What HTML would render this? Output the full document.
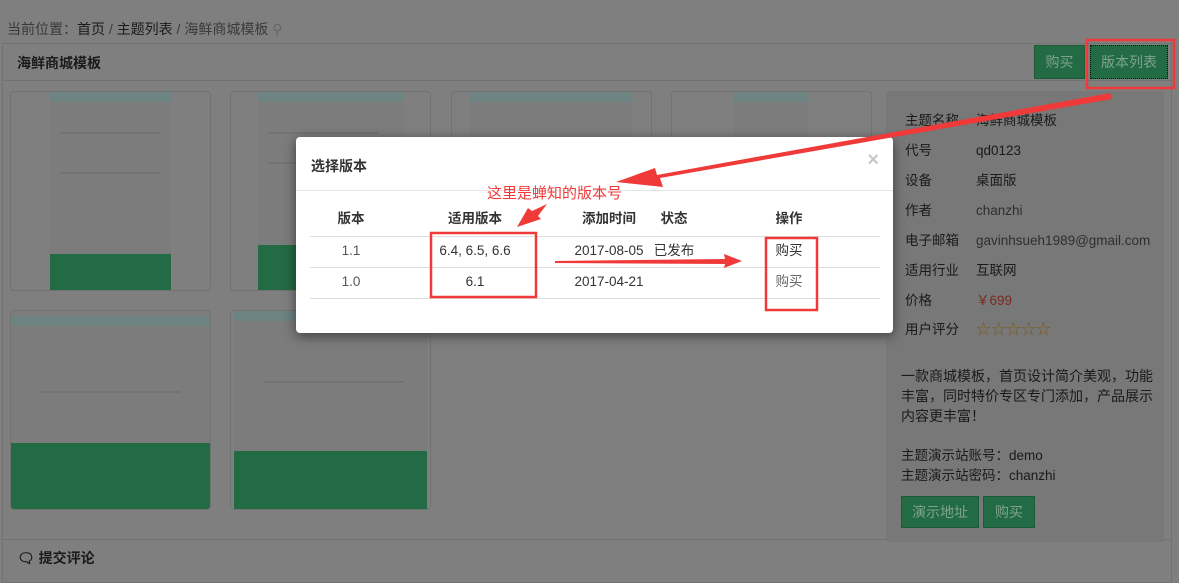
<!DOCTYPE html>
<html><head><meta charset="utf-8"><style>
*{box-sizing:border-box;margin:0;padding:0}
body{width:1179px;height:576px;overflow:hidden;background:#7f7f7f;font-family:"Liberation Sans","Noto Sans CJK SC",sans-serif;font-size:13px;color:#1a1a1a;position:relative}
.abs{position:absolute}
.crumb{left:7px;top:19px;font-size:14px;color:#3a3a3a}
.crumb b{font-weight:normal;color:#1a1a1a}
.panel{left:2px;top:43px;width:1170px;height:540px;border:1px solid #727272}
.hline{position:absolute;left:0;right:0;height:1px;background:#727272}
.title{left:17px;top:53px;font-size:14px;font-weight:bold}
.btn{position:absolute;background:#236b45;border:1px solid #1d5a3a;color:#7fa38f;font-size:14px;text-align:center}
.th{position:absolute;width:201px;height:200px;border:1px solid #727272;border-radius:4px;overflow:hidden;background:#7f7f7f}
.th .in{position:absolute;top:0;bottom:0;background:#7c7c7c}
.th .ban{position:absolute;left:0;right:0;top:0;height:10px;background:#6d8482}
.th .gr{position:absolute;left:0;right:0;bottom:0;background:#236b45}
.th .ln{position:absolute;height:2px;background:#737373}
.side{left:886px;top:91px;width:278px;height:451px;background:#787878}
.side .r,.side .v{position:absolute;font-size:13.5px;line-height:20px;height:20px;white-space:nowrap}
.side .r{left:19px}
.side .v{left:90px}
.modal{left:296px;top:137px;width:597px;height:196px;background:#fff;border-radius:4px;box-shadow:0 3px 12px rgba(0,0,0,.5)}
.modal .t{position:absolute;left:15px;top:19px;font-size:14px;font-weight:bold;color:#333}
.modal .x{position:absolute;right:14px;top:12px;font-size:20px;color:#c8c8c8;font-weight:bold}
.ml{position:absolute;left:14px;width:570px;height:1px;background:#ddd}
.c{position:absolute;font-size:13.5px;color:#333;transform:translateX(-50%);white-space:nowrap;line-height:20px}
.b{font-weight:bold}
</style></head><body>
<div class="abs crumb">当前位置：<b>首页</b> / <b>主题列表</b> / 海鲜商城模板 <span style="color:#666">&#9906;</span></div>
<div class="abs panel">
  <div class="hline" style="top:36px"></div>
  <div class="hline" style="top:495px"></div>
</div>
<div class="abs title">海鲜商城模板</div>
<div class="btn" style="left:1034px;top:45px;width:51px;height:34px;line-height:32px">购买</div>
<div class="btn" style="left:1090px;top:45px;width:78px;height:34px;line-height:32px;border:1px dotted #111">版本列表</div>

<div class="th" style="left:10px;top:91px"><div class="in" style="left:39px;width:121px"><div class="ban"></div><div class="ln" style="left:10px;top:40px;width:100px"></div><div class="ln" style="left:10px;top:80px;width:100px"></div><div class="gr" style="height:36px"></div></div></div>
<div class="th" style="left:230px;top:91px"><div class="in" style="left:27px;width:146px"><div class="ban"></div><div class="ln" style="left:10px;top:40px;width:110px"></div><div class="ln" style="left:10px;top:70px;width:110px"></div><div class="gr" style="height:45px"></div></div></div>
<div class="th" style="left:451px;top:91px"><div class="in" style="left:18px;width:162px"><div class="ban"></div></div></div>
<div class="th" style="left:671px;top:91px"><div class="in" style="left:62px;width:74px"><div class="ban"></div></div></div>
<div class="th" style="left:10px;top:310px"><div class="in" style="left:0;width:199px"><div class="ban" style="top:5px"></div><div class="ln" style="left:30px;top:80px;width:140px"></div><div class="gr" style="height:66px"></div></div></div>
<div class="th" style="left:230px;top:310px"><div class="in" style="left:3px;width:193px"><div class="ban" style="top:0"></div><div class="ln" style="left:30px;top:70px;width:140px"></div><div class="gr" style="height:58px"></div></div></div>

<div class="abs side">
  <div class="r" style="top:20px">主题名称</div><div class="v" style="top:20px">海鲜商城模板</div>
  <div class="r" style="top:50px">代号</div><div class="v" style="top:50px">qd0123</div>
  <div class="r" style="top:80px">设备</div><div class="v" style="top:80px">桌面版</div>
  <div class="r" style="top:110px">作者</div><div class="v" style="top:110px;color:#2e2e2e">chanzhi</div>
  <div class="r" style="top:140px">电子邮箱</div><div class="v" style="top:140px;color:#2e2e2e">gavinhsueh1989@gmail.com</div>
  <div class="r" style="top:170px">适用行业</div><div class="v" style="top:170px">互联网</div>
  <div class="r" style="top:200px">价格</div><div class="v" style="top:200px;color:#7a2a20">￥699</div>
  <div class="r" style="top:229px">用户评分</div><div class="v" style="top:229px;color:#7a5a1a;font-size:15px">☆☆☆☆☆</div>
  <div style="position:absolute;top:275px;left:15px;width:256px;line-height:20px;font-size:14px">一款商城模板，首页设计简介美观，功能丰富，同时特价专区专门添加，产品展示内容更丰富！</div>
  <div style="position:absolute;top:355px;left:15px;line-height:20px;font-size:13.5px">主题演示站账号：demo<br>主题演示站密码：chanzhi</div>
  <div class="btn" style="left:15px;top:405px;width:78px;height:32px;line-height:30px">演示地址</div>
  <div class="btn" style="left:97px;top:405px;width:52px;height:32px;line-height:30px">购买</div>
</div>
<div class="abs" style="left:17px;top:548px;font-size:14px;font-weight:bold">&#128488; 提交评论</div>

<div class="abs modal">
  <div class="t">选择版本</div><div class="x">×</div>
  <div class="ml" style="top:53px;left:0;width:597px;background:#e5e5e5"></div>
  <div class="c b" style="left:55px;top:72px">版本</div>
  <div class="c b" style="left:179px;top:72px">适用版本</div>
  <div class="c b" style="left:313px;top:72px">添加时间</div>
  <div class="c b" style="left:378px;top:72px">状态</div>
  <div class="c b" style="left:493px;top:72px">操作</div>
  <div class="ml" style="top:99px"></div>
  <div class="c" style="left:55px;top:104px;color:#555">1.1</div>
  <div class="c" style="left:179px;top:104px">6.4, 6.5, 6.6</div>
  <div class="c" style="left:313px;top:104px">2017-08-05</div>
  <div class="c" style="left:378px;top:104px">已发布</div>
  <div class="c" style="left:493px;top:104px">购买</div>
  <div class="ml" style="top:130px"></div>
  <div class="c" style="left:55px;top:135px;color:#555">1.0</div>
  <div class="c" style="left:179px;top:135px">6.1</div>
  <div class="c" style="left:313px;top:135px">2017-04-21</div>
  <div class="c" style="left:493px;top:135px;color:#666">购买</div>
  <div class="ml" style="top:161px"></div>
</div>

<svg class="abs" style="left:0;top:0" width="1179" height="576">
  <g fill="none" stroke="#f03a3a" stroke-width="2.5">
    <rect x="1087" y="40" width="87" height="48"/>
    <rect x="431" y="233" width="105" height="64"/>
    <rect x="766" y="238" width="51" height="72"/>
  </g>
  <polygon fill="#f03a3a" points="1110,93 1112,99 660,178 663,187 616,182 655,168 657,175"/>
  <polygon fill="#f03a3a" points="555,261 725,259 724,254 742,261 724,268 725,264 555,263"/>
  <polygon fill="#f03a3a" points="517,227 528,208 532,211 547,204 538,216 541,219"/>
  <text x="487" y="198" font-size="15" fill="#f03a3a" font-family="Liberation Sans,Noto Sans CJK SC,sans-serif">这里是蝉知的版本号</text>
</svg>
</body></html>
